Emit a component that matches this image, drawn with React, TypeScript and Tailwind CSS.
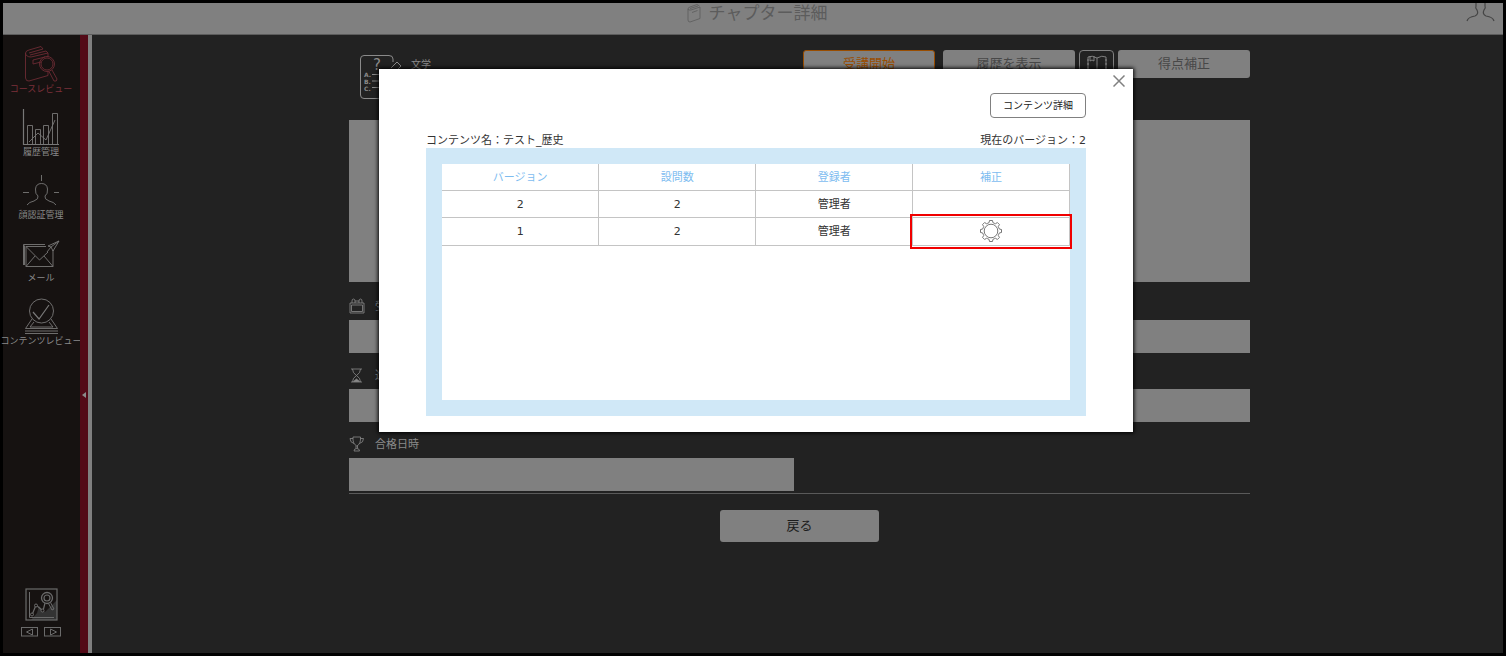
import { type ReactNode } from "react";
import { clsx } from "clsx";

type Version = {
  version: number;
  questions: number;
  author: string;
  adjustable: boolean;
};

const VERSIONS: Version[] = [
  { version: 2, questions: 2, author: "管理者", adjustable: false },
  { version: 1, questions: 2, author: "管理者", adjustable: true },
];

const COLUMNS = ["バージョン", "設問数", "登録者", "補正"];

const NAV: { label: string; icon: ReactNode; active?: boolean }[] = [
  { label: "コースレビュー", icon: <CourseIcon />, active: true },
  { label: "履歴管理", icon: <HistoryIcon /> },
  { label: "顔認証管理", icon: <FaceIcon /> },
  { label: "メール", icon: <MailIcon /> },
  { label: "コンテンツレビュー", icon: <ReviewIcon /> },
];

// Outline of a cog with eight flat teeth, centred on (11, 11).
function gearPath(): string {
  const points: string[] = [];
  const steps: [number, number][] = [
    [-13, 8.6],
    [-8, 10.6],
    [8, 10.6],
    [13, 8.6],
    [22.5, 8.4],
  ];
  for (let tooth = 0; tooth < 8; tooth++) {
    for (const [deg, r] of steps) {
      const a = ((tooth * 45 + deg) * Math.PI) / 180;
      points.push(`${(11 + r * Math.sin(a)).toFixed(2)} ${(11 - r * Math.cos(a)).toFixed(2)}`);
    }
  }
  return `M${points.join(" L")} Z`;
}

export default function App() {
  return (
    <div className="relative flex min-h-screen flex-col border-3 border-black bg-[#222222] font-['DejaVu_Sans','Noto_Sans_CJK_JP',sans-serif] text-[11px] leading-4">
      <Header />
      <div className="flex flex-1">
        <Sidebar />
        <ChapterDetail />
      </div>
      <VersionDialog />
    </div>
  );
}

function Header() {
  return (
    <header className="flex h-8 items-start border-b border-[#5c5c5c] bg-[#808080] text-[#5c5c5c]">
      <div className="w-12" />
      <h1 className="flex flex-1 items-center justify-center gap-2 text-[17px] leading-5">
        <svg viewBox="0 0 14 20" className="h-5 w-3.5" fill="none" stroke="currentColor" strokeWidth="0.8">
          <path d="M1 6 L1 17 Q1 19 3 19 L13 15.500 V4 L4 7 Q1 7.500 1 6 Q1 4.500 3 4 L10 1.500 L12.500 3" />
          <path d="M3 5.500 L11 3 M5 9.500 L10.500 7.500" />
        </svg>
        チャプター詳細
      </h1>
      <button type="button" aria-label="ユーザー" className="w-10">
        <svg viewBox="0 0 40 20" className="h-5 w-10" fill="none" stroke="#454545" strokeWidth="1.2">
          <path d="M13 0 V3 Q12 5 14 7 Q16 11 12 13 Q5 14 4 18" />
          <path d="M22 0 V3 Q23 5 21 7 Q19 11 23 13 Q30 14 31 18" />
        </svg>
      </button>
    </header>
  );
}

function Sidebar() {
  return (
    <aside className="flex shrink-0">
      <div className="flex w-[77px] flex-col items-center justify-between bg-[#161211] pt-[7px] pr-px pb-4">
        <nav className="flex flex-col items-center gap-[9px]">
          {NAV.map((item) => (
            <a
              key={item.label}
              href="#"
              className={clsx(
                "flex flex-col items-center text-[9px] leading-[14px] whitespace-nowrap",
                item.active ? "text-[#7c303a]" : "text-[#8a8a8a]",
              )}
            >
              {item.icon}
              {item.label}
            </a>
          ))}
        </nav>
        <div className="flex flex-col items-center gap-1.5 text-[#6b6b6b]">
          <button type="button" aria-label="分析">
            <svg viewBox="0 0 33 33" className="size-[33px]" fill="none" stroke="currentColor">
              <path d="M14 18 L20 24 L32 12 V32 H6 L12 25 Z" fill="#333333" stroke="none" />
              <rect x="1" y="1" width="31" height="31" strokeWidth="1.2" />
              <path d="M4.500 4 V29.500 H29" />
              <path d="M7 27 L11 17 L18 23 L20 15" strokeWidth="1.2" />
              <circle cx="7" cy="26.500" r="1.500" fill="#161211" />
              <circle cx="11" cy="17.500" r="1.500" fill="#161211" />
              <circle cx="17.500" cy="22.500" r="1.500" fill="#161211" />
              <circle cx="22" cy="10" r="5.500" strokeWidth="1.300" fill="#161211" />
              <circle cx="22" cy="10" r="3" strokeWidth="1.200" />
              <path d="M23.500 15.500 L27 22 L29 21 L25.500 14.500" />
            </svg>
          </button>
          <div className="flex gap-1.5">
            <PagerButton label="前へ" path="M11.500 2 L5.500 5 L11.500 8 Z" />
            <PagerButton label="次へ" path="M6.500 2 L12.500 5 L6.500 8 Z" />
          </div>
        </div>
      </div>
      <button
        type="button"
        aria-label="メニューを閉じる"
        className="flex w-2 items-start justify-center bg-[#530a17] pt-[356px]"
      >
        <svg viewBox="0 0 4 8" className="h-2 w-1" fill="#8a8a8a">
          <path d="M4 1 V7 L0 4 Z" />
        </svg>
      </button>
      <div className="w-1 bg-[#808080]" />
    </aside>
  );
}

function PagerButton({ label, path }: { label: string; path: string }) {
  return (
    <button type="button" aria-label={label}>
      <svg viewBox="0 0 17 10" className="h-2.5 w-[17px]" fill="none" stroke="currentColor">
        <rect x="0.500" y="0.500" width="16" height="8.500" />
        <path d={path} />
      </svg>
    </button>
  );
}

function ChapterDetail() {
  return (
    <main className="flex-1 pt-[15px] pr-4 pl-5 text-[#8a8a8a]">
      <div className="mx-auto max-w-[901px]">
        <div className="flex h-[70px] items-start">
          <div className="flex flex-1 items-start gap-2 pt-1 pl-2.5">
            <QuizIcon />
            <p className="text-[10px] leading-[22px]">文学</p>
          </div>
          <div className="flex gap-1">
            <button
              type="button"
              className="mr-1 h-7 w-[132px] rounded-[3px] border border-[#994d00] bg-[#808080] text-[13px] text-[#994d00]"
            >
              受講開始
            </button>
            <button type="button" className="h-7 w-[132px] rounded-[3px] bg-[#808080] text-[13px] text-[#484848]">
              履歴を表示
            </button>
            <button
              type="button"
              aria-label="テキスト"
              className="flex h-7 w-[35px] justify-center rounded-[4px] border border-[#808080] pt-1"
            >
              <svg viewBox="0 0 22 18" className="h-[18px] w-[22px]" fill="none" stroke="currentColor" strokeWidth="0.900">
                <path d="M11 3 Q6 0 2 2 V16 Q6 14 11 17 Q16 14 20 16 V2 Q16 0 11 3 V17" />
                <path d="M4 1 V6 L6 5 L8 6 V1 M1 5 H3 M1 9 H3 M1 13 H3 M19 5 H21 M19 9 H21 M19 13 H21" />
              </svg>
            </button>
            <button type="button" className="h-7 w-[132px] rounded-[3px] bg-[#808080] text-[13px] text-[#484848]">
              得点補正
            </button>
          </div>
        </div>

        <textarea
          aria-label="説明"
          readOnly
          className="mb-0.5 block h-[162px] w-full resize-none bg-[#808080] outline-none"
        />

        <Field id="period" label="受講期間" icon={<CalendarIcon />} extra="受講終了日" />
        <Field id="progress" label="進捗状況" icon={<HourglassIcon />} extra="所要時間" />
        <Field id="passed" label="合格日時" icon={<TrophyIcon />} />

        <hr className="mt-0.5 border-[#5a5a5a]" />
        <button
          type="button"
          className="mx-auto mt-4 block h-8 w-[159px] rounded-[3px] bg-[#808080] text-[13px] text-[#1c1c1c]"
        >
          戻る
        </button>
      </div>
    </main>
  );
}

function Field({
  id,
  label,
  icon,
  extra,
}: {
  id: string;
  label: string;
  icon: ReactNode;
  extra?: string;
}) {
  return (
    <div className="pt-3.5">
      <label htmlFor={id} className="flex h-[22px] items-start gap-2.5 leading-[18px]">
        {icon}
        {label}
      </label>
      <div className="grid grid-cols-2 gap-[11px]">
        <input id={id} readOnly className="h-[33px] w-full bg-[#808080] outline-none" />
        {extra && (
          <input aria-label={extra} readOnly className="h-[33px] w-full bg-[#808080] outline-none" />
        )}
      </div>
    </div>
  );
}

function VersionDialog() {
  return (
    <div className="absolute inset-0 flex items-start justify-center pt-[66px] pl-1.5">
      <section
        role="dialog"
        aria-label="バージョン一覧"
        className="relative w-[754px] bg-white px-[47px] pt-6 pb-4 text-[#333333] shadow-[0_0_4px_1px_#000000]"
      >
        <button type="button" aria-label="閉じる" className="absolute top-1.5 right-2">
          <svg viewBox="0 0 12 12" className="size-3" stroke="#808080" strokeWidth="1.500">
            <path d="M0.500 0.500 L11.500 11.500 M11.500 0.500 L0.500 11.500" />
          </svg>
        </button>

        <div className="flex justify-end">
          <button
            type="button"
            className="h-[25px] w-24 rounded-[4px] border border-[#808080] text-[10px] text-[#222222]"
          >
            コンテンツ詳細
          </button>
        </div>

        <div className="mt-4 flex justify-between leading-[14px]">
          <p>コンテンツ名：テスト_歴史</p>
          <p>現在のバージョン：2</p>
        </div>

        <div className="bg-[#d0e8f7] p-4">
          <div className="h-[236px] bg-white">
            <table className="w-full table-fixed border-collapse text-center">
              <thead>
                <tr className="h-[26px] border-b border-[#c4c4c4] text-[#7dbcf0]">
                  {COLUMNS.map((c) => (
                    <th key={c} scope="col" className="border-r border-[#c4c4c4] pt-0.5 font-normal">
                      {c}
                    </th>
                  ))}
                </tr>
              </thead>
              <tbody>
                {VERSIONS.map((v) => (
                  <tr
                    key={v.version}
                    className={clsx("border-b border-[#c4c4c4]", v.adjustable ? "h-7" : "h-[27px]")}
                  >
                    <td className="border-r border-[#c4c4c4] pt-0.5">{v.version}</td>
                    <td className="border-r border-[#c4c4c4] pt-0.5">{v.questions}</td>
                    <td className="border-r border-[#c4c4c4] pt-0.5">{v.author}</td>
                    <td className="relative border-r border-[#c4c4c4]">
                      {v.adjustable && (
                        <>
                          <button type="button" aria-label="補正" className="block w-full">
                            <svg
                              viewBox="0 0 22 22"
                              className="mx-auto size-[22px]"
                              fill="none"
                              stroke="#666666"
                              strokeWidth="0.900"
                              strokeLinejoin="round"
                            >
                              <circle cx="11" cy="11" r="6.800" />
                              <path d={gearPath()} />
                            </svg>
                          </button>
                          <span className="pointer-events-none absolute -inset-x-[3px] -inset-y-1 border-2 border-[#f00000]" />
                        </>
                      )}
                    </td>
                  </tr>
                ))}
              </tbody>
            </table>
          </div>
        </div>
      </section>
    </div>
  );
}

function NavIcon({ children }: { children: ReactNode }) {
  return (
    <svg
      viewBox="0 0 41 40"
      className="h-10 w-[41px] opacity-85"
      fill="none"
      stroke="currentColor"
      strokeWidth="0.900"
    >
      {children}
    </svg>
  );
}

function CourseIcon() {
  return (
    <NavIcon>
      <path d="M4.500 11 V36 Q5 39.500 8 39 L27 33.500 V29 M27 15 V11 L10 15 Q5 15 4.500 11 Q5 8.500 8 8 L20 4.500" />
      <path d="M8 11 L22 7 M9 13 L25 9 M20 4.500 L22 7 M25 9 L27 11 M20 20 L12 22 V18 L24 15" />
      <circle cx="26" cy="22" r="7.500" />
      <circle cx="26" cy="22" r="6" />
      <path d="M28 29.500 L33 39 Q36 40 36 37 L31 28" />
    </NavIcon>
  );
}

function HistoryIcon() {
  return (
    <NavIcon>
      <path d="M2.500 4 V39.500 H38" strokeWidth="1.200" />
      <path d="M6.500 39 V20.500 H11.500 V39 M14.500 39 V24.500 H19.500 V39 M22.500 39 V20.500 H27.500 V39 M31.500 39 V8.500 H36.500 V39" />
      <path d="M8 37 L17 28 L25 35 L34 15" />
    </NavIcon>
  );
}

function FaceIcon() {
  return (
    <NavIcon>
      <path d="M20.500 7 V13 M2 24.500 H8 M33 24.500 H38" />
      <path d="M6 37 Q8 34 13 33 Q18 31 17 28 Q14 26 14.500 21 Q15 15.500 20.500 15.500 Q26 15.500 26.500 21 Q27 26 24 28 Q23 31 28 33 Q33 34 35 37" />
    </NavIcon>
  );
}

function MailIcon() {
  return (
    <NavIcon>
      <path d="M5 15.500 H25 M32 19 V35.500 H5 V15.500 L18.500 29 L27 21 M5 35.500 L14 25 M32 35.500 L23 25" />
      <path d="M2.500 34 V13.500 H24 M3.500 34 V14.500" />
      <path d="M38 10 L27 15 L30 16 L32 20 Z M38 10 L30 16 M30 16 L26 21" />
    </NavIcon>
  );
}

function ReviewIcon() {
  return (
    <NavIcon>
      <circle cx="20.500" cy="17" r="12" />
      <path d="M12 18 L18 25 L28 11" strokeWidth="1.200" />
      <path d="M11 25 L4.500 34.500 H36.500 L30 25 M13 28 L9 33 H32 L28 28" />
      <path d="M4 37 H37 M4 39.500 H37" />
    </NavIcon>
  );
}

function QuizIcon() {
  return (
    <svg viewBox="0 0 44 46" className="h-[46px] w-11" fill="none" stroke="currentColor">
      <path d="M34 20 V41 Q34 44.500 30 44.500 H5 Q1.500 44.500 1.500 41 V5 Q1.500 1.500 5 1.500 H30 Q34 1.500 34 5 V8" />
      <path d="M32 14 L38 8 L42 12 L36 18" />
      <path d="M13 20.500 H24 M13 27 H24 M13 33.500 H24" />
      <text x="14" y="16" fontSize="15" fill="currentColor" stroke="none">?</text>
      <g fontSize="6" fontWeight="bold" fill="currentColor" stroke="none">
        <text x="5" y="23">A.</text>
        <text x="5" y="30">B.</text>
        <text x="5" y="37">C.</text>
      </g>
    </svg>
  );
}

function FieldIcon({ children }: { children: ReactNode }) {
  return (
    <svg viewBox="0 0 16 16" className="size-4" fill="none" stroke="currentColor" strokeWidth="0.800">
      {children}
    </svg>
  );
}

function CalendarIcon() {
  return (
    <FieldIcon>
      <path d="M1 5 H15 V15 H1 Z M2.500 7 H13.500 V13.500 H2.500 Z" />
      <path d="M3 5 V3 Q3 1 4.500 1 Q6 1 6 3 V5 M10 5 V3 Q10 1 11.500 1 Q13 1 13 3 V5 M6 3 H10" />
    </FieldIcon>
  );
}

function HourglassIcon() {
  return (
    <FieldIcon>
      <path d="M2 2 H13 M2 15 H13 M3.500 2 Q3.500 6 7.500 8.500 Q11.500 11 11.500 15 M11.500 2 Q11.500 6 7.500 8.500 Q3.500 11 3.500 15" />
      <path d="M4.500 14.500 L7.500 12 L10.500 14.500 Z" fill="currentColor" />
    </FieldIcon>
  );
}

function TrophyIcon() {
  return (
    <FieldIcon>
      <path d="M4 1 H11.500 Q12 8 7.800 10 Q3.500 8 4 1 Z M4 2.500 H1 Q1 6.500 5 7.500 M11.500 2.500 H14.500 Q14.500 6.500 10.500 7.500" />
      <path d="M7 10 V12.500 M8.500 10 V12.500 M5 15 Q5 12.500 7.800 12.500 Q10.500 12.500 10.500 15 Z" />
    </FieldIcon>
  );
}
